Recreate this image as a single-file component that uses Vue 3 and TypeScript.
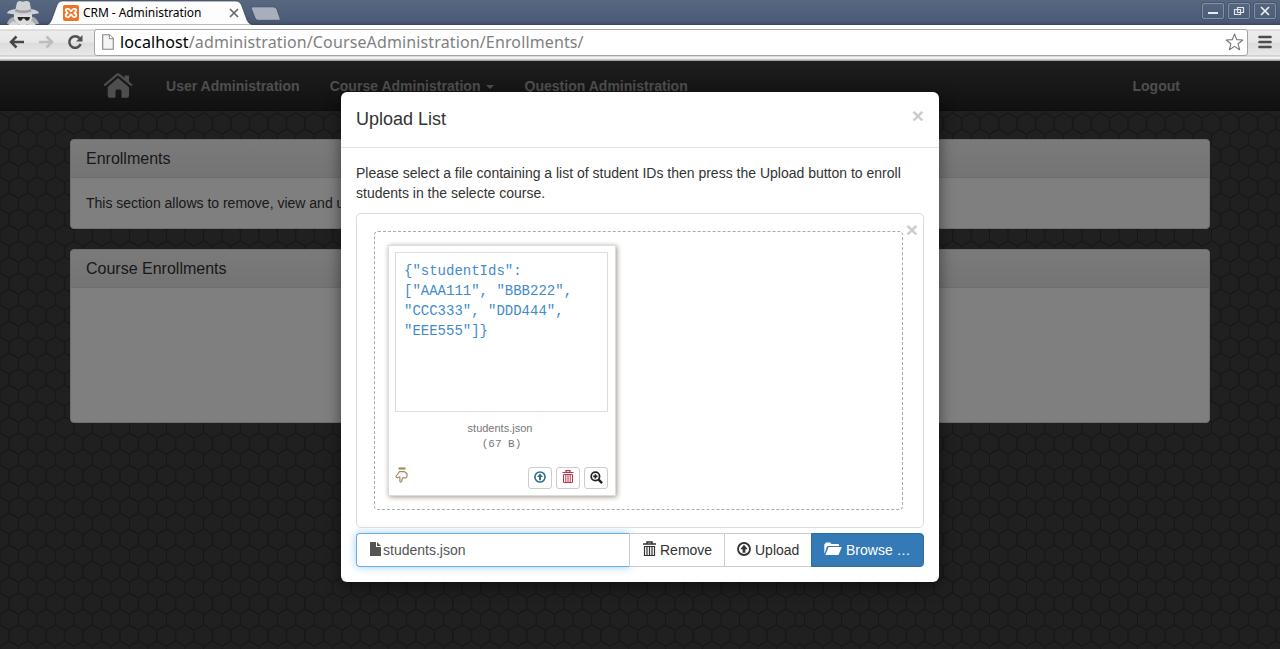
<script setup lang="ts">
interface NavItem { label: string; caret?: boolean }
interface Panel { title: string; text: string; kind: string }

const navItems: NavItem[] = [
  { label: 'User Administration' },
  { label: 'Course Administration', caret: true },
  { label: 'Question Administration' },
]
const panels: Panel[] = [
  { title: 'Enrollments', text: 'This section allows to remove, view and upload', kind: 'intro' },
  { title: 'Course Enrollments', text: '', kind: 'list' },
]
const fileLines: string[] = ['{"studentIds":', '["AAA111", "BBB222",', '"CCC333", "DDD444",', '"EEE555"]}']
</script>

<template>
  <div class="window">
    <header class="chrome">
      <div class="titlebar">
        <svg class="incognito" width="40" height="25" viewBox="0 0 40 25">
          <path d="M7 24C8 19 12 17 15 16.500H31C35 17 38 20 39 24Z" fill="#a9acb2" />
          <path d="M14 12H32V18Q31 24 26 25H20Q15 23 14 18Z" fill="#dcdcdd" />
          <path d="M15.500 9 17 2.500Q18 .8 20 1L22.500 1.800 26 1Q29 .6 29.700 2.500L31 9Q39 10.500 39 13.200 32 15 23 15T7 13.200Q7 10.500 15.500 9Z" fill="#d0d1d4" />
          <path d="M15.500 9Q23 12 31 9L31.400 11.500Q23 14.500 15 11.500Z" fill="#9b9da2" />
          <path d="M17.500 17H30L29.500 19Q28.500 21.300 26 20.500L24.300 18.500H23L21.300 20.500Q18.800 21.300 18 19Z" fill="#26282c" />
          <path d="M8 25 13 21 20 25ZM27 25 32 21 36 25Z" fill="#d6d7da" />
        </svg>
        <div class="tab">
          <svg class="tab-shape" width="206" height="25" viewBox="0 0 206 25">
            <path d="M0 25Q3 24 4.500 20L10 5Q11.500 1 15 1H189Q193 1 194.500 5L200 20Q201.500 24 206 25Z" fill="#fdfdfd" stroke="#303a4e" stroke-width=".7" />
          </svg>
          <svg class="favicon" width="16" height="16" viewBox="0 0 16 16">
            <rect width="16" height="16" rx="2" fill="#ee7324" />
            <path d="M5 3.800C1.500 3.500 2.500 7.200 5.200 8 1.800 8.500 2 12.400 5 12.200 7.300 12 6.500 9.500 8 9.500S8.700 12 11 12.200C14 12.400 14.200 8.500 10.800 8 13.500 7.200 14.500 3.500 11 3.800 8.700 4 9.500 6.200 8 6.200S7.300 4 5 3.800Z" fill="none" stroke="#fff" stroke-width="1.800" />
          </svg>
          <span class="tab-title">CRM - Administration</span>
          <svg class="tab-close" width="10" height="10" viewBox="0 0 10 10"><path d="M1 1 9 9M9 1 1 9" stroke="#686868" stroke-width="1.700" /></svg>
        </div>
        <svg class="new-tab" width="32" height="15" viewBox="0 0 32 15"><path d="M3 .8H23Q26 .8 27 3.500L30.300 13Q30.600 14.300 29 14.300H8Q6 14.300 5 12L1.300 2.500Q.8 .8 3 .8Z" fill="#a7afbd" stroke="#3f4b61" stroke-width=".8" /></svg>
        <div class="window-buttons">
          <span><svg width="22" height="16" viewBox="0 0 22 16"><path d="M6 10H16" stroke="#e8ebef" stroke-width="2" /></svg></span>
          <span><svg width="22" height="16" viewBox="0 0 22 16"><path d="M9.500 4.500H15.500V9.500H9.500ZM6.500 6.500H12.500V11.500H6.500Z" fill="none" stroke="#e3e7ec" stroke-width="1.200" /></svg></span>
          <span><svg width="22" height="16" viewBox="0 0 22 16"><path d="M7 4 15 12M15 4 7 12" stroke="#eef0f3" stroke-width="1.700" /></svg></span>
        </div>
      </div>
      <div class="toolbar">
        <div class="nav-buttons">
          <svg width="16" height="14" viewBox="0 0 16 14"><path d="M15 7H2.500M7.500 1.500 2 7 7.500 12.500" fill="none" stroke="#484848" stroke-width="2.500" /></svg>
          <svg width="16" height="14" viewBox="0 0 16 14"><path d="M1 7H13.500M8.500 1.500 14 7 8.500 12.500" fill="none" stroke="#bdbdbd" stroke-width="2.500" /></svg>
          <svg width="16" height="16" viewBox="0 0 16 16"><path d="M12.500 4.200A5.800 5.800 0 1 0 13.600 10" fill="none" stroke="#505050" stroke-width="2.500" /><path d="M15.500 1V7.500H9Z" fill="#505050" /></svg>
        </div>
        <div class="address">
          <svg class="page-icon" width="12" height="16" viewBox="0 0 12 16"><path d="M.7 .7H7.500L11.300 4.500V15.300H.7Z" fill="#f5f5f5" stroke="#858585" stroke-width="1.100" /><path d="M7.300 .7V4.700H11.300" fill="#fff" stroke="#858585" /></svg>
          <span class="url"><b>localhost</b>/administration/CourseAdministration/Enrollments/</span>
          <svg class="star" width="19" height="18" viewBox="0 0 19 18"><path d="M9.500 1 11.700 6.600 17.800 7 13.100 10.800 14.600 16.700 9.500 13.400 4.400 16.700 5.900 10.800 1.200 7 7.300 6.600Z" fill="#fff" stroke="#777" stroke-width="1.100" stroke-linejoin="round" /></svg>
        </div>
        <svg class="menu-icon" width="14" height="14" viewBox="0 0 14 14"><path d="M1.500 2H12.500M1.500 7H12.500M1.500 12H12.500" stroke="#4c4c4c" stroke-width="2.600" stroke-linecap="round" /></svg>
      </div>
    </header>

    <main class="page">
      <svg class="texture" width="1280" height="588">
        <defs>
          <pattern id="hexes" width="18.49" height="32" patternUnits="userSpaceOnUse" patternTransform="translate(9.2 52)">
            <rect width="18.49" height="32" fill="#414141" />
            <g fill="none" stroke="#2c2c2c" stroke-width="1.100">
              <path d="M0 5V16L9.245 21 18.490 16V5L9.245 0 0 5" />
              <path d="M18.490 5V16M9.245 21V32" />
            </g>
          </pattern>
          <pattern id="hexes-right" href="#hexes" patternTransform="translate(980.3 52)" />
        </defs>
        <rect width="800" height="588" fill="url(#hexes)" />
        <rect x="800" width="480" height="588" fill="url(#hexes-right)" />
      </svg>
      <nav class="navbar">
        <svg class="home" width="30" height="26" viewBox="0 0 30 26">
          <path d="M15 5 26 14.300V22.500Q26 24.700 24 24.700H18.500V18Q18.500 16.500 17 16.500H14Q12.500 16.500 12.500 18V24.700H6.500Q4.700 24.700 4.700 22.500V14Z" fill="#9d9d9d" />
          <path d="M1.200 12.500 13.800 1.900Q15 1 16.200 1.900L29 12.500" fill="none" stroke="#9d9d9d" stroke-width="2.100" />
          <path d="M21.500 2.500H26V9.500L21.500 6Z" fill="#9d9d9d" />
        </svg>
        <a v-for="item in navItems" :key="item.label">{{ item.label }}<i v-if="item.caret" class="caret"></i></a>
        <a class="logout">Logout</a>
      </nav>
      <div class="container">
        <section v-for="panel in panels" :key="panel.title" class="panel" :class="panel.kind">
          <h3>{{ panel.title }}</h3>
          <div class="panel-body">{{ panel.text }}</div>
        </section>
      </div>
      <div class="backdrop">
        <div class="modal">
          <div class="modal-header">
            <h4>Upload List</h4>
            <span class="close">×</span>
          </div>
          <div class="modal-body">
            <p>Please select a file containing a list of student IDs then press the Upload button to enroll students in the selecte course.</p>
            <div class="preview">
              <span class="close preview-close">×</span>
              <div class="dropzone">
                <div class="frame">
                  <pre class="content"><span v-for="line in fileLines" :key="line">{{ line }}</span></pre>
                  <div class="caption">students.json<span class="size">(67 B)</span></div>
                  <div class="actions">
                    <svg class="hand" width="13" height="17" viewBox="0 0 13 17"><path d="M3.500 1.500H10.500" stroke="#a68a5b" stroke-width="2.200" /><path d="M4.500 4.700H9.500L12 6.800V9.300L10.800 10.800H7.600L6.600 14.500Q5.600 16 4.900 14.500V9.800L2.600 10.800Q.5 10.500 1.200 9L3.200 6.500Z" fill="none" stroke="#a68a5b" stroke-width="1.200" stroke-linejoin="round" /></svg>
                    <button><svg width="12" height="12" viewBox="0 0 14 14"><circle cx="7" cy="7" r="5.900" fill="none" stroke="#31708f" stroke-width="1.900" /><path d="M7 3 10.500 7H8.200V10.700H5.800V7H3.500Z" fill="#31708f" /></svg></button>
                    <button><svg width="12" height="14" viewBox="0 0 12 14"><path d="M.5 2.500H11.500M4 2.500V.6H8V2.500" fill="none" stroke="#b8354a" stroke-width="1.200" /><path d="M1.500 4.500H10.500V12.500H1.500ZM3.800 5V12.500M6 5V12.500M8.200 5V12.500" fill="none" stroke="#b8354a" /></svg></button>
                    <button><svg width="13" height="13" viewBox="0 0 14 14"><circle cx="5.800" cy="5.800" r="4.500" fill="none" stroke="#222" stroke-width="1.900" /><path d="M5.800 3.500V8.100M3.500 5.800H8.100" stroke="#222" stroke-width="1.700" /><path d="M9 9 13 13" stroke="#222" stroke-width="2.600" /></svg></button>
                  </div>
                </div>
              </div>
            </div>
            <div class="input-group">
              <div class="file-field">
                <svg width="11" height="14" viewBox="0 0 11 14"><path d="M0 0H6V5H11V14H0ZM7 0 11 4H7Z" fill="#555" /></svg>
                <span>students.json</span>
              </div>
              <div class="btn remove">
                <svg width="13" height="16" viewBox="0 0 13 16"><path d="M0 3H13M4 3V1H9V3" fill="none" stroke="#333" stroke-width="1.500" /><path d="M1.500 5.500H11.500V14.500H1.500ZM4 6V14.500M6.500 6V14.500M9 6V14.500" fill="none" stroke="#333" stroke-width="1.200" /></svg>
                <span>Remove</span>
              </div>
              <div class="btn upload">
                <svg width="14" height="14" viewBox="0 0 14 14"><circle cx="7" cy="7" r="6" fill="none" stroke="#333" stroke-width="1.800" /><path d="M7 2.800 10.700 7.200H8.400V10.800H5.600V7.200H3.300Z" fill="#333" /></svg>
                <span>Upload</span>
              </div>
              <div class="btn browse">
                <svg width="18" height="14" viewBox="0 0 18 14"><path d="M.3 12V2.500L2 .5H6L7.500 2H14Q15 2 15 3V4H4.200Q3.200 4 2.800 5Z" fill="#fff" /><path d="M4.700 5H17.800L14.700 12.400Q14.400 13 13.700 13H1.300Z" fill="#fff" /></svg>
                <span>Browse …</span>
              </div>
            </div>
          </div>
        </div>
      </div>
    </main>
  </div>
</template>

<style>
html, body { margin: 0; overflow: hidden; }
</style>

<style scoped>
* { box-sizing: border-box; }
.window { width: 1280px; height: 649px; display: flex; flex-direction: column; font: 14px/20px "Liberation Sans", Arial, sans-serif; color: #333; overflow: hidden; }
.chrome { height: 61px; font-family: "Noto Sans", sans-serif; flex: none; }
.titlebar { height: 25px; display: flex; align-items: flex-start; background: linear-gradient(#58687f, #4c5b78 80%, #465470 92%, #38435a); }
.incognito { flex: none; }
.tab { position: relative; width: 206px; height: 25px; margin-left: 7px; display: flex; align-items: center; padding-left: 16px; }
.tab-shape { position: absolute; left: 0; top: 0; }
.favicon, .tab-title, .tab-close { position: relative; }
.tab-title { margin-left: 4px; width: 120px; font-size: 12px; line-height: 25px; color: #000; white-space: nowrap; letter-spacing: -.06px; }
.tab-close { margin-left: 26px; }
.new-tab { margin: 6px 0 0 -3px; }
.window-buttons { margin: 3px 4px 0 auto; display: flex; gap: 4px; }
.window-buttons span { width: 22px; height: 16px; border: 1px solid #8290a5; border-radius: 2px; display: flex; align-items: center; justify-content: center; box-shadow: 0 0 0 1px #48566d; flex: none; }
.window-buttons svg { flex: none; }
.toolbar { height: 36px; display: flex; align-items: center; background: linear-gradient(#fdfdfd 0, #fdfdfd 4px, #c9c9c9 5px, #ececec 6px, #e8e8e8 17px, #dcdcdc 18px, #e8e8e8 30px, #bbb 31px, #f7f7f7 32px, #eee 34px, #9b9b9b 35px, #aaa 36px); padding-bottom: 2px; }
.nav-buttons { display: flex; align-items: center; width: 94px; padding-left: 9px; gap: 13px; }
.address { height: 27px; width: 1154px; background: #fff; border: 1px solid #a5a5a5; border-radius: 3px; display: flex; align-items: center; padding: 0 3px 0 7px; }
.url { margin: -1px 0 0 6px; font-size: 16px; color: #808080; letter-spacing: .13px; }
.url b { font-weight: 400; color: #000; }
.star { margin-left: auto; }
.menu-icon { margin-left: 10px; }
.page { position: relative; height: 588px; background: #404040; overflow: hidden; }
.texture { position: absolute; left: 0; top: 0; }
.navbar { position: relative; height: 50px; background: linear-gradient(#3c3c3c, #222); border-bottom: 1px solid #1a1a1a; display: flex; align-items: center; padding: 0 100px 0 103px; font-weight: 700; color: #9d9d9d; }
.navbar a { margin-left: 30px; line-height: 20px; letter-spacing: .02px; }
.home { margin-right: 3px; }
.caret { display: inline-block; margin-left: 6px; border: 4px solid transparent; border-top-color: #9d9d9d; border-bottom: 0; vertical-align: middle; }
.navbar .logout { margin-left: auto; }
.container { position: relative; width: 1140px; margin: 28px auto 0; display: flex; flex-direction: column; gap: 20px; }
.panel { background: #fff; border: 1px solid #ddd; border-radius: 4px; overflow: hidden; }
.panel h3 { margin: 0; height: 38px; padding: 9px 15px; font-size: 16px; line-height: 20px; font-weight: 400; background: linear-gradient(#f5f5f5, #e8e8e8); border-bottom: 1px solid #ddd; }
.panel-body { padding: 15px; }
.intro { height: 90px; }
.list { height: 174px; }
.backdrop { position: absolute; inset: 0; background: rgba(0, 0, 0, .5); }
.modal { width: 598px; height: 490px; margin: 31px auto 0; background: #fff; border-radius: 6px; box-shadow: 0 5px 15px rgba(0, 0, 0, .5); }
.modal-header { height: 56px; padding: 15px; border-bottom: 1px solid #e5e5e5; display: flex; justify-content: space-between; }
.modal-header h4 { margin: 0; font-size: 18px; line-height: 25px; font-weight: 400; }
.close { font-size: 21px; line-height: 21px; font-weight: 700; color: #ccc; }
.modal-header .close { margin-top: -2px; }
.modal-body { padding: 15px; }
.modal-body p { margin: 0 0 10px; }
.preview { position: relative; height: 315px; border: 1px solid #ddd; border-radius: 5px; padding: 17px 20px 17px 17px; }
.preview-close { position: absolute; right: 5px; top: 5px; }
.dropzone { height: 279px; border: 1px dashed #aaa; border-radius: 4px; padding: 13px; }
.frame { width: 228px; height: 251px; border: 1px solid #ddd; box-shadow: 1px 1px 5px #a2958a; padding: 6px; display: flex; flex-direction: column; }
.content { width: 213px; height: 160px; flex: none; margin: 0; border: 1px solid #ddd; padding: 8px; font: 14px/20px "Liberation Mono", monospace; color: #428bca; }
.content span { display: block; }
.caption { margin-top: 8px; display: flex; flex-direction: column; align-items: center; font-size: 11px; line-height: 16px; color: #777; padding-right: 4px; }
.size { font: 11px/15px "Liberation Mono", monospace; padding: 1px 0 0 3px; }
.actions { width: 213px; margin-top: 15px; height: 24px; display: flex; gap: 4px; }
.hand { margin: 0 auto 0 0; }
button { width: 24px; height: 22px; padding: 0; border: 1px solid #ccc; border-radius: 3px; background: #fff; display: flex; align-items: center; justify-content: center; }
button svg { margin-top: -2px; }
.input-group { margin-top: 5px; height: 34px; display: flex; }
.file-field { width: 274px; border: 1px solid #66afe9; border-right-color: #ccc; border-radius: 4px 0 0 4px; box-shadow: 0 0 8px rgba(102, 175, 233, .6); display: flex; align-items: center; padding-left: 13px; color: #555; gap: 2px; }
.btn { border: 1px solid #ccc; border-left: 0; background: #fff; display: flex; align-items: center; padding-left: 13px; gap: 4px; }
.file-field svg, .btn svg { margin-top: -2px; }
.remove { width: 95px; }
.upload { width: 86px; padding-left: 12px; border-right: 0; }
.browse { width: 113px; border: 1px solid #2e6da4; background: #337ab7; color: #fff; border-radius: 0 4px 4px 0; padding-left: 12px; }
</style>
